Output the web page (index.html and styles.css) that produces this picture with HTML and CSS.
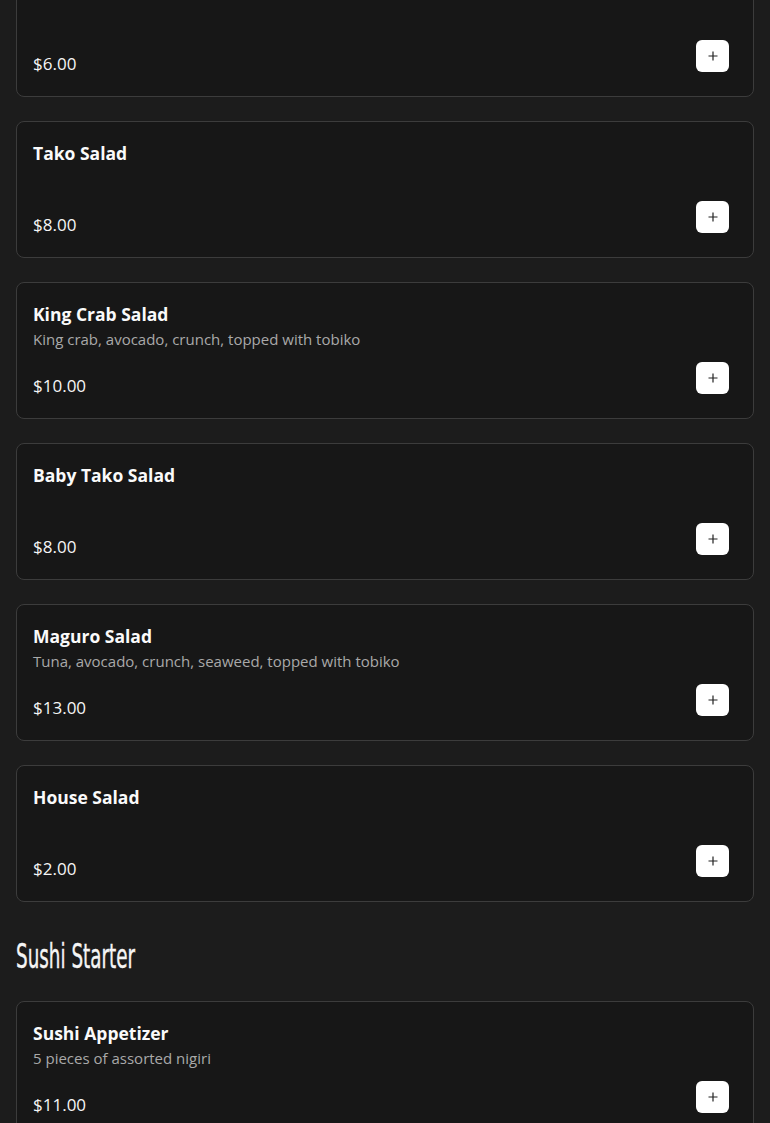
FILE: index.html
```html
<!DOCTYPE html>
<html lang="en">
<head>
<meta charset="utf-8">
<title>Menu</title>
<link rel="stylesheet" href="styles.css">
</head>
<body>
<main class="menu">
  <section class="section">
    <div class="list">
      <article class="card">
        <h3 class="name">Seaweed Salad</h3>
        <p class="desc"></p>
        <div class="row"><span class="price">$6.00</span><button class="add" aria-label="Add"><svg viewBox="0 0 12 12" width="12" height="12"><path d="M6 1.5v9M1.5 6h9" stroke="#222" stroke-width="1.2" fill="none"/></svg></button></div>
      </article>
      <article class="card">
        <h3 class="name">Tako Salad</h3>
        <p class="desc"></p>
        <div class="row"><span class="price">$8.00</span><button class="add" aria-label="Add"><svg viewBox="0 0 12 12" width="12" height="12"><path d="M6 1.5v9M1.5 6h9" stroke="#222" stroke-width="1.2" fill="none"/></svg></button></div>
      </article>
      <article class="card">
        <h3 class="name">King Crab Salad</h3>
        <p class="desc">King crab, avocado, crunch, topped with tobiko</p>
        <div class="row"><span class="price">$10.00</span><button class="add" aria-label="Add"><svg viewBox="0 0 12 12" width="12" height="12"><path d="M6 1.5v9M1.5 6h9" stroke="#222" stroke-width="1.2" fill="none"/></svg></button></div>
      </article>
      <article class="card">
        <h3 class="name">Baby Tako Salad</h3>
        <p class="desc"></p>
        <div class="row"><span class="price">$8.00</span><button class="add" aria-label="Add"><svg viewBox="0 0 12 12" width="12" height="12"><path d="M6 1.5v9M1.5 6h9" stroke="#222" stroke-width="1.2" fill="none"/></svg></button></div>
      </article>
      <article class="card">
        <h3 class="name">Maguro Salad</h3>
        <p class="desc">Tuna, avocado, crunch, seaweed, topped with tobiko</p>
        <div class="row"><span class="price">$13.00</span><button class="add" aria-label="Add"><svg viewBox="0 0 12 12" width="12" height="12"><path d="M6 1.5v9M1.5 6h9" stroke="#222" stroke-width="1.2" fill="none"/></svg></button></div>
      </article>
      <article class="card">
        <h3 class="name">House Salad</h3>
        <p class="desc"></p>
        <div class="row"><span class="price">$2.00</span><button class="add" aria-label="Add"><svg viewBox="0 0 12 12" width="12" height="12"><path d="M6 1.5v9M1.5 6h9" stroke="#222" stroke-width="1.2" fill="none"/></svg></button></div>
      </article>
    </div>
  </section>
  <section class="section">
    <h2 class="section-title"><span class="section-title-text">Sushi Starter</span></h2>
    <div class="list">
      <article class="card">
        <h3 class="name">Sushi Appetizer</h3>
        <p class="desc">5 pieces of assorted nigiri</p>
        <div class="row"><span class="price">$11.00</span><button class="add" aria-label="Add"><svg viewBox="0 0 12 12" width="12" height="12"><path d="M6 1.5v9M1.5 6h9" stroke="#222" stroke-width="1.2" fill="none"/></svg></button></div>
      </article>
    </div>
  </section>
</main>
</body>
</html>
```

FILE: styles.css
```css
html, body {
  margin: 0;
  padding: 0;
  background: #1c1c1c;
}
body {
  font-family: "Open Sans", "DejaVu Sans", sans-serif;
  color: #f2f2f2;
}
.menu {
  margin-top: -40px;
  padding: 0 16px;
  display: flex;
  flex-direction: column;
}
.section-title {
  margin: 34px 0 25px;
  font-family: "DejaVu Sans Condensed", "Liberation Sans Narrow", sans-serif;
  font-weight: 400;
  font-size: 34px;
  line-height: 40px;
  color: #f5f5f5;
  white-space: nowrap;
}
.section-title-text {
  display: inline-block;
  transform: scaleX(0.6);
  transform-origin: left center;
  -webkit-text-stroke: 0.4px #f5f5f5;
}
.list {
  display: flex;
  flex-direction: column;
  gap: 24px;
}
.card {
  background: #171717;
  border: 1px solid #3c3c3c;
  border-radius: 8px;
  padding: 19px 24px 24px 16px;
  display: flex;
  flex-direction: column;
}
.name {
  margin: 0;
  font-size: 17.5px;
  font-weight: 700;
  line-height: 24px;
  color: #fafafa;
}
.desc {
  margin: 2px 0 0;
  min-height: 22px;
  font-size: 15px;
  line-height: 22px;
  color: #a9a9a9;
}
.row {
  margin-top: 12px;
  display: flex;
  justify-content: space-between;
  align-items: flex-end;
}
.price {
  font-size: 17px;
  line-height: 16px;
  color: #f5f5f5;
}
.add {
  width: 33px;
  height: 32px;
  border: 0;
  border-radius: 6px;
  background: #fff;
  padding: 0;
  display: flex;
  align-items: center;
  justify-content: center;
  cursor: pointer;
}
```
